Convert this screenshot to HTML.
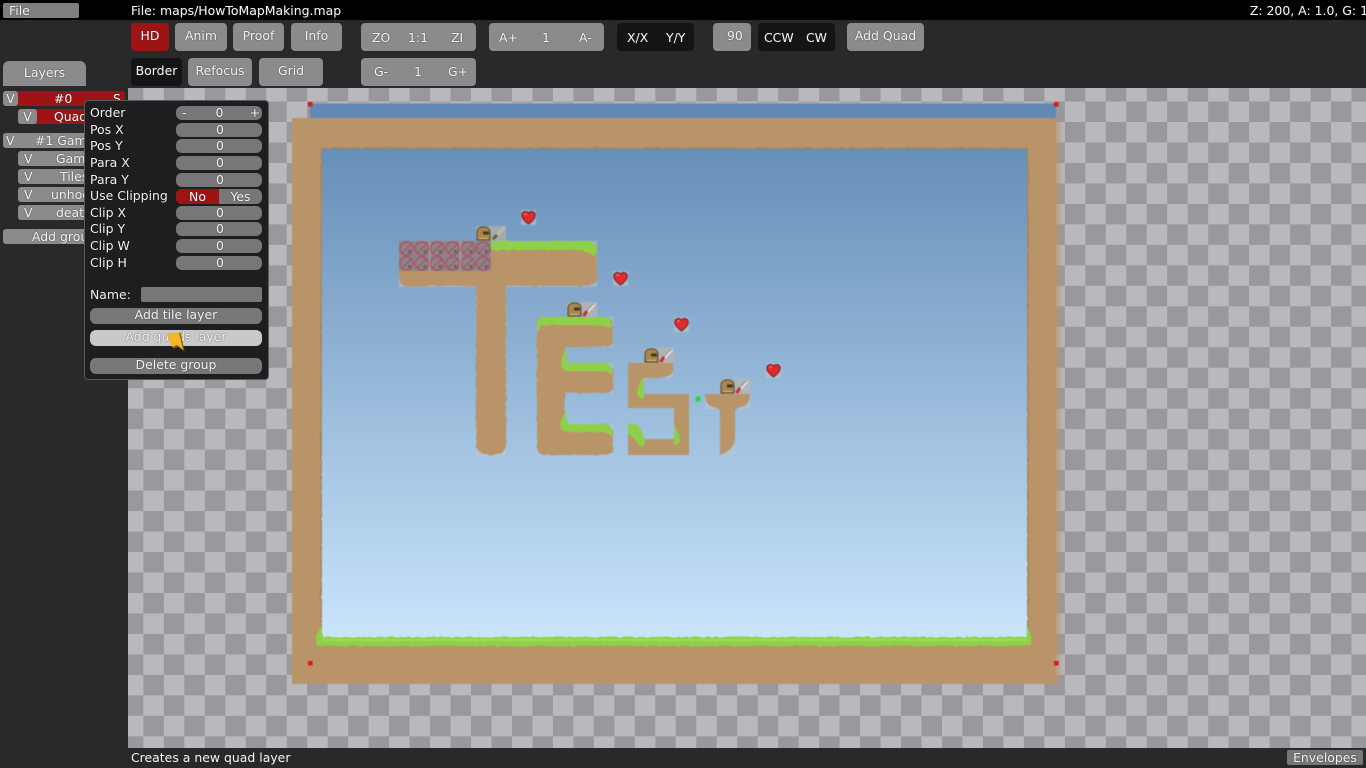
<!DOCTYPE html>
<html><head><meta charset="utf-8"><title>Map Editor</title>
<style>
html,body{margin:0;padding:0;width:1366px;height:768px;overflow:hidden;background:#29282b}
body{position:relative;font-family:"DejaVu Sans","Liberation Sans",sans-serif;font-size:12.45px;color:#f4f4f4}
.a{position:absolute}
.b{position:absolute;background:#8b8a8c;border-radius:4px;text-align:center;height:28px;line-height:26px;top:23px;text-shadow:0 0 1.2px #333}
.d{background:#141316}
.r{background:#9e1414}
.t{position:absolute;white-space:nowrap;text-shadow:0 0 1.2px #333}
.l{position:absolute;left:90px;white-space:nowrap;line-height:16px;height:16px;text-shadow:0 0 1px #000}
.v{position:absolute;left:176px;width:86px;height:14px;background:#777678;border-radius:6px;text-align:center;line-height:13px;text-shadow:0 0 1.2px #333}
.w{position:absolute;left:90px;width:172px;height:16px;background:#777678;border-radius:6px;text-align:center;line-height:14px;text-shadow:0 0 1.2px #333}
.row{position:absolute;height:15px;background:#8b8a8c;border-radius:3px;line-height:15px;overflow:hidden;text-shadow:0 0 1.2px #333}
</style></head><body>

<!-- Canvas -->
<div class="a" style="left:128px;top:88px;width:1238px;height:660px;background:repeating-conic-gradient(#9a989c 0 25%,#b9b8bc 0 50%) 15.4px 34px/40.96px 40.96px"></div>

<svg class="a" style="left:0;top:0;filter:blur(.45px)" width="1366" height="768" viewBox="0 0 1366 768">
<defs>
<linearGradient id="sky" gradientUnits="userSpaceOnUse" x1="0" y1="103" x2="0" y2="663">
<stop offset="0" stop-color="#5d87b2"/><stop offset="1" stop-color="#cfe9ff"/></linearGradient>
<pattern id="forbid" patternUnits="userSpaceOnUse" x="399" y="241" width="15.33" height="15">
<rect width="15.33" height="15" fill="#8d848b"/>
<circle cx="7.6" cy="7.5" r="6.6" fill="none" stroke="#b04a5c" stroke-width="1.2"/>
<path d="M2.5 12.5L12.8 2.5" stroke="#b04a5c" stroke-width="1.2"/>
<circle cx="10.5" cy="10.5" r="1.7" fill="#5f676e"/>
</pattern>
<filter id="rough" x="-5%" y="-5%" width="110%" height="110%">
<feTurbulence type="fractalNoise" baseFrequency=".18" numOctaves="2" seed="4"/>
<feDisplacementMap in="SourceGraphic" scale="3"/>
</filter>
<g id="heart"><rect width="15" height="15" fill="#c9c6c4" opacity=".55"/>
<path d="M7.5 14C2.6 10.6 .8 8 .8 5.2C.8 1.4 5.4 .2 7.5 3.2C9.6 .2 14.2 1.4 14.2 5.2C14.2 8 12.4 10.6 7.5 14Z" fill="#e02a2c" stroke="#5c1d1d" stroke-width=".9"/>
<path d="M3.3 5C3.8 3.4 5.6 3.4 6.3 4.6" stroke="#f58080" fill="none"/></g>
<g id="armor"><rect width="15" height="15" fill="#b3afa5" opacity=".75"/>
<path d="M1 14V6.5C1 2.6 4 .8 7.5 .8C11.4 .8 14 3 14 6.5V14Z" fill="#a8884f" stroke="#4e3d22" stroke-width=".9"/>
<rect x="7" y="5.5" width="6" height="3" fill="#43361f"/>
<path d="M3 12.5H12" stroke="#d9b97a"/></g>
<g id="sword"><rect width="15" height="15" fill="#b3afa5" opacity=".75"/>
<path d="M14 1L5 10" stroke="#d8d6cc" stroke-width="2.2"/>
<path d="M14 1L5 10" stroke="#8f8d80" stroke-width=".7"/>
<path d="M6 9L2 13" stroke="#6e5c34" stroke-width="3"/></g>
<g id="rifle"><rect width="15" height="15" fill="#b8b4b1" opacity=".8"/>
<path d="M13.5 1.5L5 11" stroke="#eeebeb" stroke-width="1.6"/>
<path d="M13 2L10 3L4 10" stroke="#8a8a8a" fill="none" stroke-width=".8"/>
<path d="M5 9L1.5 14" stroke="#c82a2a" stroke-width="3"/></g>
</defs>

<!-- Top blue strip and sky -->
<rect x="310" y="103" width="746" height="15" fill="#6189b3"/>
<rect x="310" y="102.4" width="746" height="1" fill="#c5cfdb" opacity=".6"/>

<!-- Edge fade on right -->
<g fill="#b89468">
<rect x="1056" y="118" width="4" height="566" opacity=".5"/>
<rect x="1060" y="118" width="3" height="566" opacity=".18"/>
</g>
<rect x="292" y="118" width="764" height="566" fill="#b89468"/>
<rect x="320.5" y="147.5" width="708" height="496" fill="#a6845c" filter="url(#rough)"/>
<rect x="322" y="149" width="705" height="492" fill="url(#sky)" filter="url(#rough)"/>
<rect x="322" y="149" width="705" height="492" fill="url(#sky)"/>

<!-- Bottom grass -->
<g filter="url(#rough)" fill="#8fd04a">
<path d="M316 643C316 636 318 630 321 626L323 637H1026L1027 626C1030 630 1032 637 1031 643C1031 645 1028 646 1024 646H323C318 646 316 645 316 643Z"/>
</g>
<path d="M322 640H1027" stroke="#a2e058" stroke-width="1.6"/>

<!-- Tile halos -->
<g opacity=".5" fill="#c4c8cc">
<rect x="399" y="241" width="198" height="46"/><rect x="476" y="286" width="30" height="170"/>
<rect x="537" y="317" width="76" height="30"/><rect x="537" y="363" width="76" height="30"/><rect x="537" y="424" width="76" height="31"/>
<rect x="628" y="363" width="45" height="15"/>
<rect x="705" y="394" width="45" height="15"/><rect x="720" y="408" width="15" height="47"/>
</g>
<g filter="url(#rough)">
<path d="M491 241H585C594 241 597 246 597 252V276C597 283 592 286 586 286H506V444C506 451 500 455 491 455C482 455 476 451 476 444V286H408C402 286 399 283 399 276V241Z" fill="#b89468"/>
<path d="M491 241H588C594 241 597 245 597 253L593 256C588 250 580 250 570 250H491Z" fill="#8fd04a"/>
<path d="M537 317H606C611 317 613 320 613 326V340C613 345 610 347 604 347H565V363H603C610 363 613 367 613 373V387C613 392 609 393 603 393H565V424H603C610 424 613 428 613 434V447C613 452 609 455 602 455H546C540 455 537 452 537 447Z" fill="#b89468"/>
<path d="M537 331V323C537 319 540 317 544 317H604C610 317 612 321 612 328C604 325 590 325 575 325H548C543 325 540 328 537 331Z" fill="#8fd04a"/>
<path d="M566 349C563 352 561 358 561 364C561 369 564 371 570 371H596C604 371 610 372 612 375V367C610 364 604 363 598 363H567Z" fill="#8fd04a"/>
<path d="M566 411C563 415 560 420 560 425C560 430 564 432 570 432H596C604 432 610 433 612 437V429C610 425 604 424 598 424H567Z" fill="#8fd04a"/>
</g>
<rect x="399" y="241" width="92" height="30" fill="url(#forbid)"/>
<rect x="429.2" y="241" width="1" height="30" fill="#b9bcc2" opacity=".7"/>
<rect x="459.8" y="241" width="1" height="30" fill="#b9bcc2" opacity=".7"/>
<!-- S -->
<path d="M628 363H673V372C670 376 664 378 658 378H643V394H689V455H628V424H635C640 426 643 432 643 439H674V408H628Z" fill="#b89468"/>
<path d="M642 379C639 384 637 389 637 393C637 396 640 399 644 399V379Z" fill="#8fd04a"/>
<path d="M628 424H636C640 428 645 435 645 442C645 446 642 447 640 446C636 440 632 436 628 434Z" fill="#8fd04a"/>
<path d="M674 425C677 430 680 435 680 440C680 443 677 445 674 445Z" fill="#8fd04a"/>
<!-- small T -->
<path d="M705 394H750C750 401 747 406 741 407C737 408 735 409 735 412V438C735 446 729 452 720 455V412C720 409 717 408 713 407C708 406 705 401 705 394Z" fill="#b89468"/>
<rect x="695.5" y="396.5" width="5" height="5" fill="#22d84a"/>

<!-- pickups -->
<use href="#armor" x="476" y="226"/><use href="#sword" x="491" y="226"/>
<use href="#armor" x="567" y="302"/><use href="#rifle" x="582" y="302"/>
<use href="#armor" x="644" y="348"/><use href="#rifle" x="659" y="348"/>
<use href="#armor" x="720" y="379"/><use href="#rifle" x="735" y="379"/>
<use href="#heart" x="521" y="210"/><use href="#heart" x="613" y="271"/>
<use href="#heart" x="674" y="317"/><use href="#heart" x="766" y="363"/>

<!-- corners -->
<g fill="#e01616">
<rect x="308" y="102" width="4.5" height="4.5"/><rect x="1054" y="102" width="4.5" height="4.5"/>
<rect x="308" y="661" width="4.5" height="4.5"/><rect x="1054" y="661" width="4.5" height="4.5"/>
</g>
</svg>

<!-- Chrome -->
<div class="a" style="left:0;top:0;width:1366px;height:20px;background:#000"></div>
<div class="a" style="left:0;top:20px;width:1366px;height:68px;background:#29282b"></div>
<div class="a" style="left:0;top:88px;width:128px;height:680px;background:#29282b"></div>
<div class="a" style="left:0;top:748px;width:1366px;height:20px;background:#29282b"></div>

<div class="a" style="left:3px;top:3px;width:76px;height:15px;background:#7f7e80;border-radius:2px"></div>
<div class="t" style="left:9px;top:3px;line-height:15px">File</div>
<div class="t" style="left:131px;top:2px;line-height:17px">File: maps/HowToMapMaking.map</div>
<div class="t" style="right:-2px;top:2px;line-height:17px">Z: 200, A: 1.0, G: 1</div>

<div class="b r" style="left:131px;width:38px">HD</div>
<div class="b" style="left:175px;width:52px">Anim</div>
<div class="b" style="left:233px;width:51px">Proof</div>
<div class="b" style="left:291px;width:51px">Info</div>
<div class="b" style="left:361px;width:115px"></div>
<div class="t" style="left:372px;top:30px">ZO</div><div class="t" style="left:408px;top:30px">1:1</div><div class="t" style="left:451px;top:30px">ZI</div>
<div class="b" style="left:489px;width:115px"></div>
<div class="t" style="left:499px;top:30px">A+</div><div class="t" style="left:542px;top:30px">1</div><div class="t" style="left:579px;top:30px">A-</div>
<div class="b d" style="left:617px;width:77px"></div>
<div class="t" style="left:627px;top:30px">X/X</div><div class="t" style="left:666px;top:30px">Y/Y</div>
<div class="b" style="left:713px;width:38px"></div>
<div class="t" style="left:727px;top:28px">90</div>
<div class="b d" style="left:758px;width:77px"></div>
<div class="t" style="left:764px;top:30px">CCW</div><div class="t" style="left:806px;top:30px">CW</div>
<div class="b" style="left:847px;width:77px">Add Quad</div>

<div class="b d" style="left:131px;top:58px;width:51px">Border</div>
<div class="b" style="left:188px;top:58px;width:64px">Refocus</div>
<div class="b" style="left:259px;top:58px;width:64px">Grid</div>
<div class="b" style="left:361px;top:58px;width:115px"></div>
<div class="t" style="left:374px;top:64px">G-</div><div class="t" style="left:414px;top:64px">1</div><div class="t" style="left:448px;top:64px">G+</div>

<div class="a" style="left:3px;top:61px;width:83px;height:25px;background:#8b8a8c;border-radius:6px 6px 0 0;text-align:center;line-height:24px;text-shadow:0 0 1.2px #333">Layers</div>

<!-- Layers -->
<div class="row" style="left:3px;top:91px;width:122px;background:#9e1414"></div>
<div class="row" style="left:3px;top:91px;width:15px;background:#8b8a8c;text-align:center">V</div>
<div class="t" style="left:54px;top:91px;line-height:15px">#0</div>
<div class="t" style="left:113px;top:91px;line-height:15px">S</div>
<div class="row" style="left:18px;top:109px;width:107px;background:#9e1414"></div>
<div class="row" style="left:18px;top:109px;width:19px;text-align:center">V</div>
<div class="t" style="left:54px;top:109px;line-height:15px">Quads</div>
<div class="row" style="left:3px;top:133px;width:122px"></div>
<div class="t" style="left:6px;top:133px;line-height:15px">V</div>
<div class="t" style="left:35px;top:133px;line-height:15px">#1 Game</div>
<div class="row" style="left:18px;top:151px;width:107px"></div>
<div class="t" style="left:24px;top:151px;line-height:15px">V</div>
<div class="t" style="left:56px;top:151px;line-height:15px">Game</div>
<div class="row" style="left:18px;top:169px;width:107px"></div>
<div class="t" style="left:24px;top:169px;line-height:15px">V</div>
<div class="t" style="left:60px;top:169px;line-height:15px">Tiles</div>
<div class="row" style="left:18px;top:187px;width:107px"></div>
<div class="t" style="left:24px;top:187px;line-height:15px">V</div>
<div class="t" style="left:51px;top:187px;line-height:15px">unhook</div>
<div class="row" style="left:18px;top:205px;width:107px"></div>
<div class="t" style="left:24px;top:205px;line-height:15px">V</div>
<div class="t" style="left:56px;top:205px;line-height:15px">death</div>
<div class="row" style="left:3px;top:229px;width:122px"></div>
<div class="t" style="left:32px;top:229px;line-height:15px">Add group</div>

<!-- Popup -->
<div class="a" style="left:83.5px;top:100px;width:183px;height:278px;background:#1e1d20;border:1px solid #5a595c;border-radius:4px"></div>
<div class="l" style="top:105px">Order</div>
<div class="v" style="top:106px;text-indent:1px"><span style="position:absolute;left:5px">-</span>0<span style="position:absolute;right:2px">+</span></div>
<div class="l" style="top:122px">Pos X</div><div class="v" style="top:122.5px;text-indent:2px">0</div>
<div class="l" style="top:138px">Pos Y</div><div class="v" style="top:139px;text-indent:2px">0</div>
<div class="l" style="top:155px">Para X</div><div class="v" style="top:155.5px;text-indent:2px">0</div>
<div class="l" style="top:172px">Para Y</div><div class="v" style="top:172.5px;text-indent:2px">0</div>
<div class="l" style="top:188px">Use Clipping</div>
<div class="v" style="top:189px;height:15px;line-height:16px;overflow:hidden"><span style="position:absolute;left:0;top:0;width:43px;height:15px;background:#9e1414">No</span><span style="position:absolute;left:43px;top:0;width:43px">Yes</span></div>
<div class="l" style="top:205px">Clip X</div><div class="v" style="top:205.5px;text-indent:2px">0</div>
<div class="l" style="top:221px">Clip Y</div><div class="v" style="top:222px;text-indent:2px">0</div>
<div class="l" style="top:238px">Clip W</div><div class="v" style="top:239px;text-indent:2px">0</div>
<div class="l" style="top:255px">Clip H</div><div class="v" style="top:255.5px;text-indent:2px">0</div>
<div class="l" style="top:287px">Name:</div>
<div class="a" style="left:141px;top:287px;width:121px;height:15px;background:#777678;border-radius:2px"></div>
<div class="w" style="top:308px">Add tile layer</div>
<div class="w" style="top:330px;background:#c9c8ca">Add quads layer</div>
<div class="w" style="top:358px">Delete group</div>

<!-- Cursor -->
<svg class="a" style="left:164px;top:330px" width="24" height="24" viewBox="0 0 24 24">
<path d="M3 5L16 2L20 21L14 16L9 18Z" fill="#8a5a10" transform="translate(0.6,0.6)"/>
<path d="M3 4L15 2L19 20L13 15L8 17Z" fill="#f5b52a"/>
</svg>

<!-- Status -->
<div class="t" style="left:131px;top:749px;line-height:17px">Creates a new quad layer</div>
<div class="a" style="left:1287px;top:750px;width:76px;height:15px;background:#777678;border-radius:2px;text-align:center;line-height:15px;text-shadow:0 0 1.2px #333">Envelopes</div>
</body></html>
